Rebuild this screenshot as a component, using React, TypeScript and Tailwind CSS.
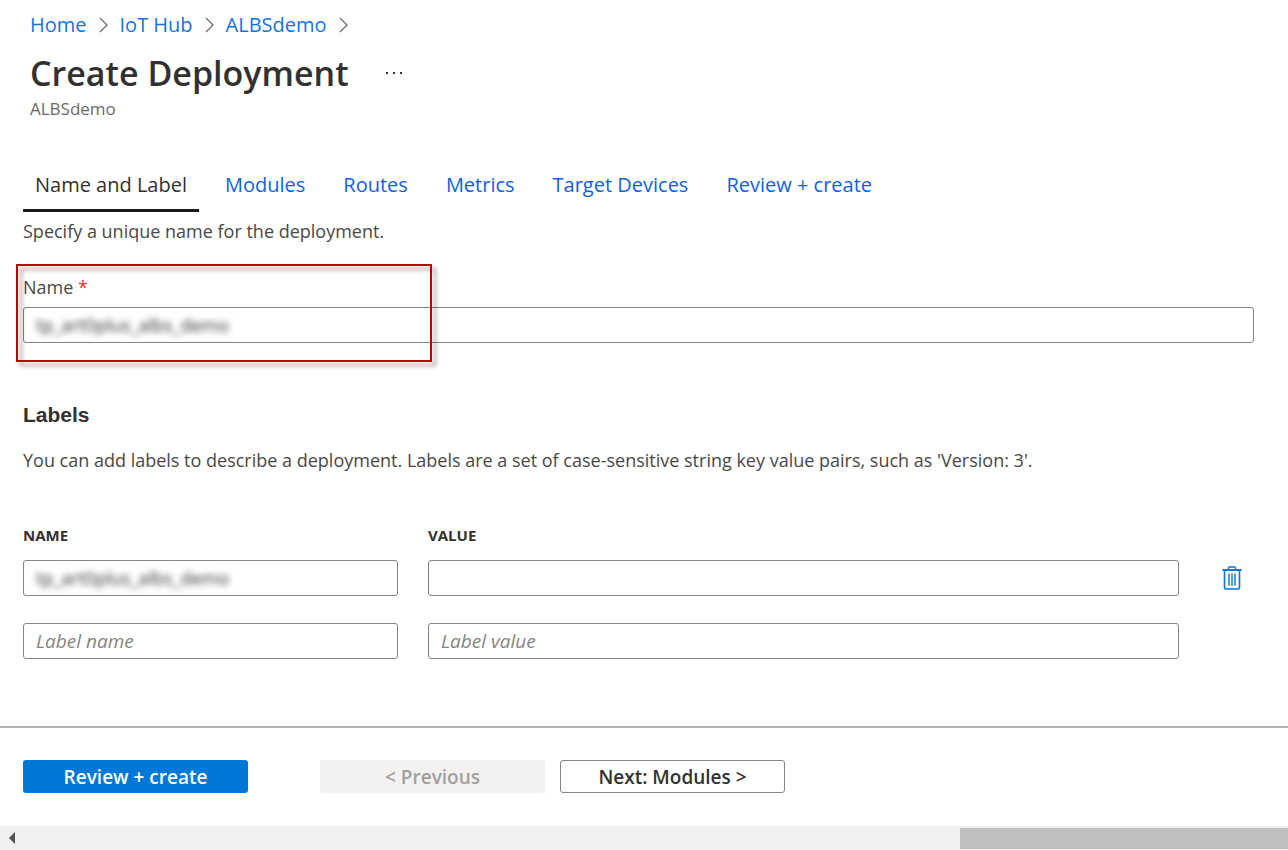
import type { ComponentProps } from 'react';

const crumbs = ['Home', 'IoT Hub', 'ALBSdemo'];
const tabs = ['Name and Label', 'Modules', 'Routes', 'Metrics', 'Target Devices', 'Review + create'];

function Chevron() {
  return (
    <svg className="h-4 w-[9px]" viewBox="0 0 9 16" fill="none" stroke="#666" strokeWidth="1.2" aria-hidden="true">
      <path d="M1 1l7 7-7 7" />
    </svg>
  );
}

function TrashIcon() {
  return (
    <svg className="h-[26px] w-5" viewBox="0 0 20 26" fill="none" stroke="#0078d4" aria-hidden="true">
      <path d="M0.5 5h19" strokeWidth="2" />
      <path d="M6.5 4.5V3q0-1 1-1h5q1 0 1 1v1.5" strokeWidth="1.5" />
      <path d="M2.5 5v17.5q0 1.5 1.5 1.5h12q1.5 0 1.5-1.5V5" strokeWidth="1.6" />
      <path d="M7 8.5v12M10 8.5v12M13 8.5v12" strokeWidth="1.4" />
    </svg>
  );
}

function TextField({ obscured = false, ...props }: ComponentProps<'input'> & { obscured?: boolean }) {
  return (
    <div className="h-9 rounded-[3px] border border-[#858483] bg-white">
      <input
        type="text"
        {...props}
        className={
          obscured
            ? 'block h-full w-full bg-transparent px-3 text-[18px] text-[#323130] blur-[3px] outline-none'
            : 'block h-full w-full bg-transparent px-3 text-[19px] text-[#323130] outline-none placeholder:text-[#858483] placeholder:italic'
        }
      />
    </div>
  );
}

export default function App() {
  return (
    <div className="flex min-h-screen flex-col bg-white font-['Open_Sans','Noto_Sans',sans-serif] text-[18px] leading-7 text-[#494847]">
      <header className="px-[30px] pt-[11px]">
        <nav aria-label="Breadcrumb" className="flex items-center gap-3 text-[20px] text-[#1474dc]">
          {crumbs.map((crumb) => (
            <span key={crumb} className="flex items-center gap-3">
              <a href="#">{crumb}</a>
              <Chevron />
            </span>
          ))}
        </nav>
        <div className="mt-2.5 flex items-center gap-8">
          <h1 className="text-[34px] leading-[48px] font-semibold text-[#323130]">Create Deployment</h1>
          <button type="button" aria-label="More options" className="p-1">
            <svg className="h-1 w-[18px]" viewBox="0 0 18 4" fill="#323130" aria-hidden="true">
              <rect x="1" y="1" width="2" height="2" />
              <rect x="8" y="1" width="2" height="2" />
              <rect x="15" y="1" width="2" height="2" />
            </svg>
          </button>
        </div>
        <p className="text-[17px] leading-6 text-[#6b6a69]">ALBSdemo</p>
      </header>

      <main className="pt-[45px] pr-[34px] pl-[23px]">
        <div role="tablist" className="flex gap-3.5 text-[20px]">
          {tabs.map((tab, i) => (
            <button
              key={tab}
              type="button"
              role="tab"
              aria-selected={i === 0}
              className={
                i === 0
                  ? 'border-b-[3px] border-[#1b1a19] px-3 pt-[5px] pb-2.5 text-[#323130]'
                  : 'border-b-[3px] border-transparent px-3 pt-[5px] pb-2.5 text-[#0f62dc]'
              }
            >
              {tab}
            </button>
          ))}
        </div>
        <p className="mt-[5px]">Specify a unique name for the deployment.</p>

        <div className="relative mt-7">
          <label htmlFor="deployment-name" className="block">
            Name <span className="text-[#e3323b]">*</span>
          </label>
          <div className="mt-[6px]">
            <TextField id="deployment-name" obscured defaultValue="tp_art0plus_albs_demo" />
          </div>
          <div className="pointer-events-none absolute -top-[9px] -left-[7px] h-[98px] w-[416px] border-2 border-[#c00000] drop-shadow-[4px_4px_2px_rgba(0,0,0,0.4)]" />
        </div>

        <h2 className="mt-[58px] font-['Liberation_Sans',Arial,sans-serif] text-[21px] font-bold text-[#323130]">Labels</h2>
        <p className="mt-[17px]">You can add labels to describe a deployment. Labels are a set of case-sensitive string key value pairs, such as 'Version: 3'.</p>

        <table className="mt-[49px] w-full table-fixed border-collapse text-left">
          <thead className="text-[15px] leading-6 text-[#323130]">
            <tr>
              <th scope="col" className="w-[405px] p-0 font-bold">NAME</th>
              <th scope="col" className="p-0 font-bold">VALUE</th>
              <td className="w-[45px] p-0" />
            </tr>
          </thead>
          <tbody>
            <tr>
              <td className="p-0 pt-[13px] pr-[30px]">
                <TextField aria-label="Label name 1" obscured defaultValue="tp_art0plus_albs_demo" />
              </td>
              <td className="p-0 pt-[13px] pr-[30px]">
                <TextField aria-label="Label value 1" />
              </td>
              <td className="p-0 pt-[13px]">
                <button type="button" aria-label="Delete label" className="mx-auto block">
                  <TrashIcon />
                </button>
              </td>
            </tr>
            <tr>
              <td className="p-0 pt-[27px] pr-[30px]">
                <TextField aria-label="Label name 2" placeholder="Label name" />
              </td>
              <td className="p-0 pt-[27px] pr-[30px]">
                <TextField aria-label="Label value 2" placeholder="Label value" />
              </td>
              <td />
            </tr>
          </tbody>
        </table>
      </main>

      <footer className="mt-auto">
        <div className="flex border-t-2 border-[#b5b5b5] px-[23px] pt-8 pb-[33px] text-[19px] leading-6 font-semibold">
          <button type="button" className="h-[33px] w-[225px] rounded-[3px] bg-[#0078d7] text-white">Review + create</button>
          <button type="button" disabled className="ml-[72px] h-[33px] w-[225px] rounded-[2px] bg-[#f3f2f1] text-[#a19f9d]">&lt; Previous</button>
          <button type="button" className="ml-[15px] h-[33px] w-[225px] rounded-[3px] border border-[#858483] text-[#323130]">Next: Modules &gt;</button>
        </div>
        <div className="flex h-6 items-center justify-between bg-[#f0f0f0] pl-[9px]">
          <svg className="h-3 w-1.5" viewBox="0 0 6 12" fill="#505050" aria-hidden="true">
            <path d="M6 0v12L0 6z" />
          </svg>
          <div className="h-[21px] w-[328px] bg-[#c0c0c0]" />
        </div>
      </footer>
    </div>
  );
}
